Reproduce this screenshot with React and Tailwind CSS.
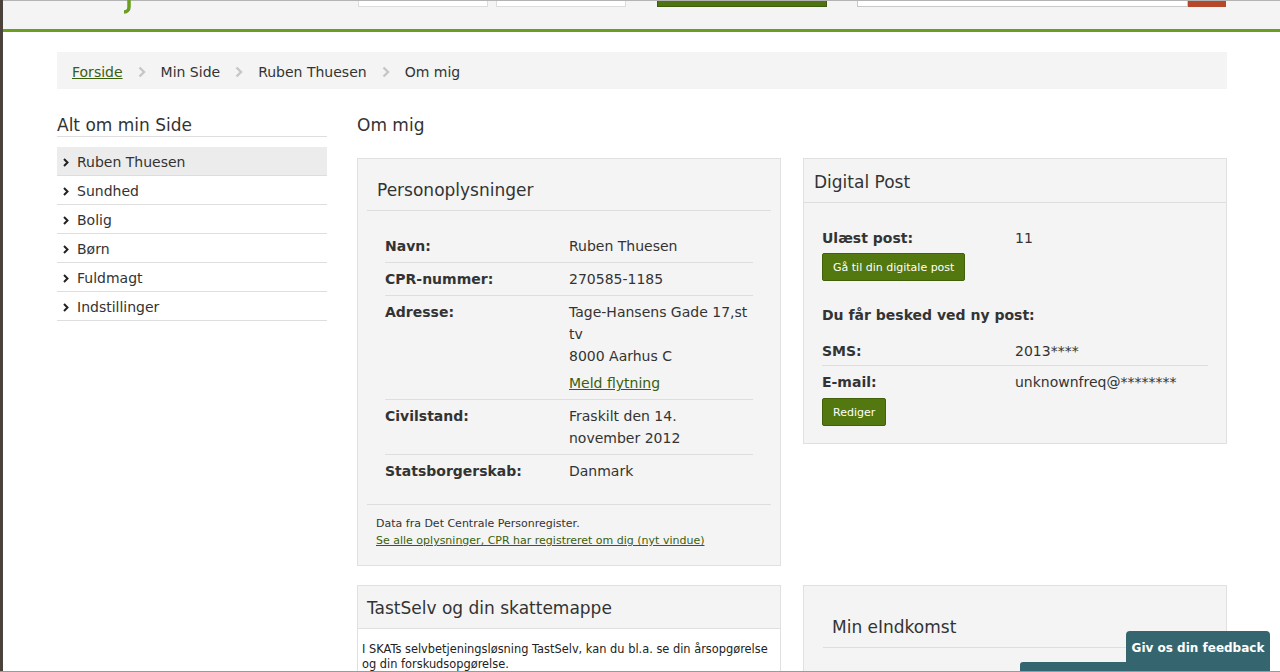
const sideItems = ['Ruben Thuesen', 'Sundhed', 'Bolig', 'Børn', 'Fuldmagt', 'Indstillinger'];

const Chevron = ({ className = '' }) => (
  <svg width="6" height="9" viewBox="0 0 6 9" className={className}>
    <path d="M1 1l3.5 3.5L1 8" fill="none" stroke="currentColor" strokeWidth="2" />
  </svg>
);

const BreadChevron = () => (
  <svg width="8" height="12" viewBox="0 0 8 12" className="text-[#c6c6c6]">
    <path d="M1.5 1.5L6 6l-4.5 4.5" fill="none" stroke="currentColor" strokeWidth="2.4" />
  </svg>
);

const InfoRow = ({ label, children, first }) => (
  <div className={`flex py-[5px] ${first ? '' : 'border-t border-[#dedede]'}`}>
    <div className="w-[184px] shrink-0 font-bold">{label}</div>
    <div className="flex-1">{children}</div>
  </div>
);

const GreenButton = ({ children, className = '' }) => (
  <button className={`h-[28px] px-[10px] bg-[#52780f] border border-[#40600a] rounded-[2px] text-white text-[11px] leading-none ${className}`}>
    {children}
  </button>
);

export default function App() {
  return (
    <div className="flex w-[1280px] h-[672px] overflow-hidden bg-white text-[#333] font-['DejaVu_Sans',sans-serif] border-b border-[#9a9a9a]">
      <div className="w-[3px] shrink-0 bg-[#4a423b]" />
      <div className="relative flex-1">
        {/* header */}
        <header className="h-[32px] bg-[#f4f4f4] border-t border-[#b3b3b3] border-b-[3px] border-b-[#6a9e1f]">
          <div className="flex items-start h-full">
            <svg width="12" height="14" viewBox="0 0 12 14" className="ml-[118px] -mt-px">
              <path d="M8 0v7c0 3-2 5-5 5" fill="none" stroke="#6a9e1f" strokeWidth="3.5" />
            </svg>
            <div className="ml-[225px] w-[130px] h-[6px] bg-white border border-t-0 border-[#dcdcdc]" />
            <div className="ml-[8px] w-[130px] h-[6px] bg-white border border-t-0 border-[#dcdcdc]" />
            <div className="ml-[31px] w-[170px] h-[6px] bg-[#4e7412] border border-t-0 border-[#3e5c0d]" />
            <div className="ml-[30px] w-[331px] h-[6px] bg-white border border-t-0 border-[#c8c8c8]" />
            <div className="w-[38px] h-[6px] bg-[#b5472a]" />
          </div>
        </header>

        <div className="ml-[54px] w-[1170px]">
          {/* breadcrumb */}
          <nav className="mt-[20px] h-[37px] bg-[#f4f4f4] flex items-center pl-[15px] pt-[3px] gap-[15px] text-[14px]">
            <a className="text-[#3b5e0c] underline">Forside</a>
            <BreadChevron />
            <span>Min Side</span>
            <BreadChevron />
            <span>Ruben Thuesen</span>
            <BreadChevron />
            <span>Om mig</span>
          </nav>

          <div className="flex gap-[30px] mt-[22px]">
            {/* sidebar */}
            <aside className="w-[270px] shrink-0">
              <h2 className="text-[17px] leading-[22px] pt-[3px] border-b border-[#dedede]">Alt om min Side</h2>
              <ul className="mt-[10px]">
                {sideItems.map((item, i) => (
                  <li
                    key={item}
                    className={`flex items-center h-[29px] pt-[2px] border-b border-[#dedede] text-[14px] ${i === 0 ? 'bg-[#ececec]' : ''}`}
                  >
                    <Chevron className="ml-[6px] mr-[8px] text-[#222]" />
                    {item}
                  </li>
                ))}
              </ul>
            </aside>

            {/* main */}
            <main className="flex-1">
              <h1 className="text-[17px] leading-[22px] pt-[3px]">Om mig</h1>

              <div className="grid grid-cols-2 gap-x-[22px] gap-y-[19px] mt-[22px] items-start">
                {/* Personoplysninger */}
                <section className="bg-[#f4f4f4] border border-[#e0e0e0] p-[9px]">
                  <h2 className="text-[17px] leading-[22px] pt-[11px] pb-[9px] px-[10px] border-b border-[#dedede]">Personoplysninger</h2>
                  <div className="mx-[18px] mt-[19px] mb-[17px] text-[14px] leading-[22px]">
                    <InfoRow label="Navn:" first>Ruben Thuesen</InfoRow>
                    <InfoRow label="CPR-nummer:">270585-1185</InfoRow>
                    <InfoRow label="Adresse:">
                      <div>Tage-Hansens Gade 17,st<br />tv<br />8000 Aarhus C</div>
                      <a className="block mt-[5px] text-[#3b5e0c] underline">Meld flytning</a>
                    </InfoRow>
                    <InfoRow label="Civilstand:">Fraskilt den 14.<br />november 2012</InfoRow>
                    <InfoRow label="Statsborgerskab:">Danmark</InfoRow>
                  </div>
                  <div className="border-t border-[#dedede] pt-[10px] pb-[7px] px-[9px] text-[11px] leading-[17px]">
                    <p>Data fra Det Centrale Personregister.</p>
                    <a className="text-[#3b5e0c] underline">Se alle oplysninger, CPR har registreret om dig (nyt vindue)</a>
                  </div>
                </section>

                {/* Digital Post */}
                <section className="bg-[#f4f4f4] border border-[#e0e0e0]">
                  <h2 className="text-[17px] leading-[22px] pt-[12px] pb-[9px] px-[10px] border-b border-[#dedede]">Digital Post</h2>
                  <div className="px-[18px] pt-[24px] pb-[17px] text-[14px] leading-[22px]">
                    <div className="flex">
                      <span className="w-[193px] font-bold">Ulæst post:</span>
                      <span>11</span>
                    </div>
                    <GreenButton className="mt-[4px]">Gå til din digitale post</GreenButton>
                    <p className="mt-[23px] font-bold">Du får besked ved ny post:</p>
                    <div className="flex mt-[9px] pt-[5px] pb-[3px] border-b border-[#dedede]">
                      <span className="w-[193px] font-bold">SMS:</span>
                      <span>2013****</span>
                    </div>
                    <div className="flex pt-[5px]">
                      <span className="w-[193px] font-bold">E-mail:</span>
                      <span>unknownfreq@********</span>
                    </div>
                    <GreenButton className="mt-[5px]">Rediger</GreenButton>
                  </div>
                </section>

                {/* TastSelv */}
                <section className="bg-white border border-[#e0e0e0]">
                  <h2 className="bg-[#f4f4f4] text-[17px] leading-[22px] pt-[11px] pb-[9px] px-[9px] border-b border-[#e0e0e0]">TastSelv og din skattemappe</h2>
                  <p className="px-[4px] pt-[13px] text-[11.4px] leading-[15px] text-[#222]">
                    I SKATs selvbetjeningsløsning TastSelv, kan du bl.a. se din årsopgørelse og din forskudsopgørelse.
                  </p>
                </section>

                {/* Min eIndkomst */}
                <section className="bg-[#f4f4f4] border border-[#e0e0e0] h-[120px] px-[19px]">
                  <h2 className="text-[17px] leading-[22px] pt-[30px] pb-[9px] px-[9px] border-b border-[#dedede]">Min eIndkomst</h2>
                </section>
              </div>
            </main>
          </div>
        </div>

        {/* feedback tab */}
        <div className="absolute left-[1017px] top-[662px] w-[110px] h-[12px] bg-[#35666f] rounded-tl-[3px]" />
        <button className="absolute left-[1123px] top-[631px] w-[144px] h-[42px] bg-[#35666f] rounded-t-[4px] text-white text-[12px] font-bold pb-[9px]">
          Giv os din feedback
        </button>
      </div>
    </div>
  );
}
